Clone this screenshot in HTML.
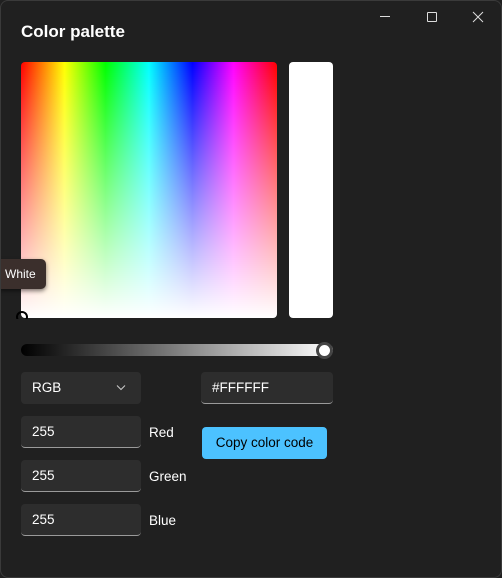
<!DOCTYPE html>
<html><head><meta charset="utf-8"><style>
*{margin:0;padding:0;box-sizing:border-box}
html,body{width:502px;height:578px;background:#202020;overflow:hidden;font-family:"Segoe UI","Liberation Sans",sans-serif;color:#fff}
.win{position:absolute;left:0;top:0;width:502px;height:578px;background:#202020}
.frame{position:absolute;left:0;top:0;width:502px;height:578px;border:1px solid #3a3a3a;border-radius:8px;pointer-events:none}
.a{position:absolute}
h1{position:absolute;left:21px;top:22px;font-size:17px;font-weight:bold}
.spec{left:21px;top:62px;width:256px;height:256px;border-radius:4px;background:linear-gradient(to bottom,rgba(255,255,255,0),#fff),linear-gradient(to right,#f00,#ff0 17%,#0f0 33%,#0ff 50%,#00f 67%,#f0f 83%,#f00)}
.prev{left:289px;top:62px;width:44px;height:256px;border-radius:4px;background:#fff}
.slider{left:21px;top:344px;width:312px;height:12px;border-radius:6px;background:linear-gradient(to right,#000,#fff)}
.thumb{left:316px;top:342px;width:17px;height:17px;border-radius:50%;background:#fff;border:3px solid #454545}
.box{background:#2d2d2d;border-radius:4px;border-bottom:1px solid #9a9a9a;font-size:13.5px;padding-left:11px;line-height:31px}
.lbl{font-size:13.5px}
.btn{left:202px;top:427px;width:125px;height:32px;border-radius:4px;background:#4cc2ff;color:#000;font-size:13.5px;text-align:center;line-height:31px}
.tip{left:0;top:259px;width:46px;height:30px;background:#3b2f2c;border-radius:0 5px 5px 0;font-size:12px;line-height:30px;padding-left:5px;box-shadow:0 2px 4px rgba(0,0,0,.5)}
</style></head><body><div class="win">
<div class="a" style="left:380px;top:16px;width:10px;height:1px;background:#ddd"></div>
<div class="a" style="left:427px;top:12px;width:10px;height:10px;border:1px solid #ddd;border-radius:1px"></div>
<svg class="a" style="left:472px;top:11px" width="12" height="12"><path d="M1 1L11 11M11 1L1 11" stroke="#ddd" stroke-width="1"/></svg>
<h1>Color palette</h1>
<div class="a spec"></div>
<div class="a" style="left:16px;top:311px;width:12px;height:12px;border-radius:50%;border:2px solid #000"></div>
<div class="a" style="left:0;top:319px;width:30px;height:10px;background:#202020"></div>
<div class="a prev"></div>
<div class="a slider"></div>
<div class="a thumb"></div>
<div class="a box" style="left:21px;top:372px;width:120px;height:32px;border-bottom:none">RGB<svg style="position:absolute;left:95px;top:12px" width="10" height="7"><path d="M1 1.5L5 5.5L9 1.5" stroke="#ccc" fill="none"/></svg></div>
<div class="a box" style="left:201px;top:372px;width:132px;height:32px">#FFFFFF</div>
<div class="a box" style="left:21px;top:416px;width:120px;height:32px">255</div>
<div class="a box" style="left:21px;top:460px;width:120px;height:32px">255</div>
<div class="a box" style="left:21px;top:504px;width:120px;height:32px">255</div>
<div class="a lbl" style="left:149px;top:425px">Red</div>
<div class="a lbl" style="left:149px;top:469px">Green</div>
<div class="a lbl" style="left:149px;top:513px">Blue</div>
<div class="a btn">Copy color code</div>
<div class="a tip">White</div>
<div class="frame"></div>
</div></body></html>
